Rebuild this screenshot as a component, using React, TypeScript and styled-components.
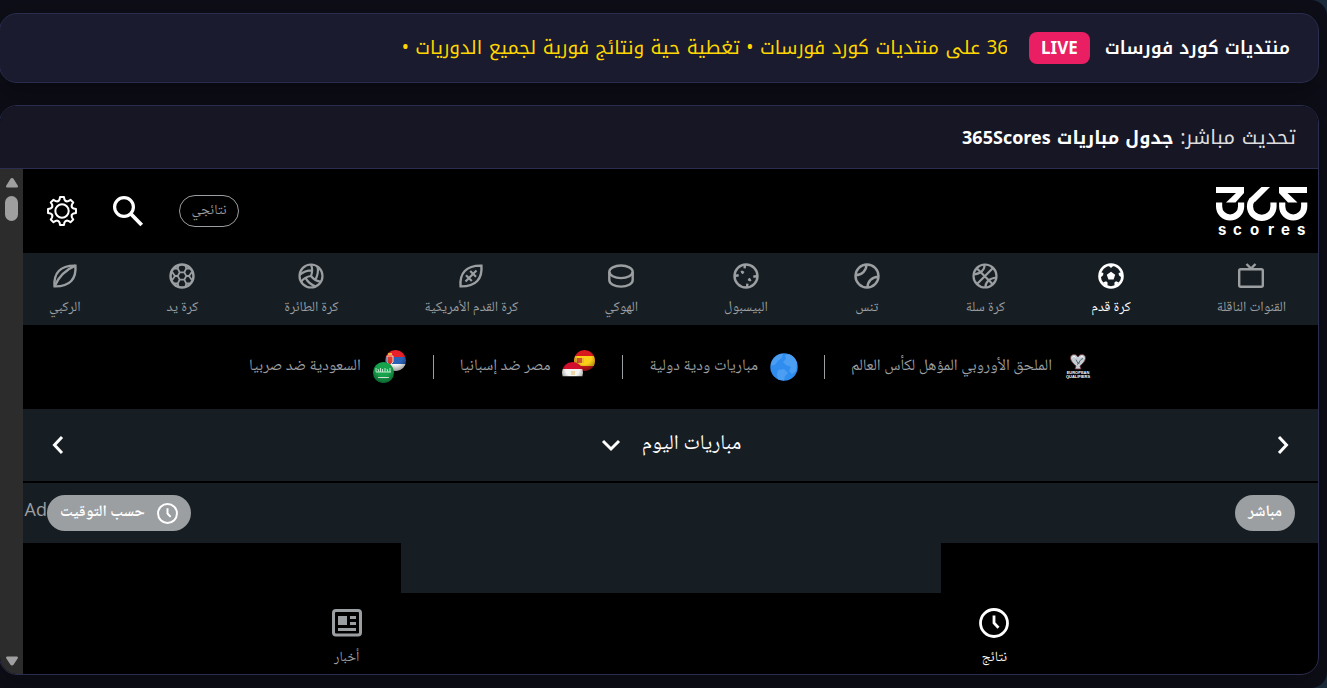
import React from 'react';
import styled, { createGlobalStyle } from 'styled-components';

const kufi = '"Noto Kufi Arabic", "Noto Sans", "DejaVu Sans", sans-serif';
const naskh = '"Noto Naskh Arabic", "Liberation Sans", "DejaVu Sans", sans-serif';

const GlobalStyle = createGlobalStyle`
  * { box-sizing: border-box; }
  body { margin: 0; background: #1c2b3b; }
  button { font: inherit; color: inherit; background: none; border: 0; padding: 0; cursor: pointer; }
  a { color: inherit; text-decoration: none; }
  svg { display: block; flex: none; overflow: visible; }
`;

const Page = styled.main`
  min-height: 100vh;
  display: flex;
  flex-direction: column;
  gap: 22px;
  padding: 13px 8px 13px 0;
  background: #0e0e18;
  border-radius: 0 16px 16px 0;
  font-family: ${kufi};
`;

const TopBar = styled.header`
  height: 70px;
  display: flex;
  align-items: center;
  padding: 0 28px 0 0;
  margin-left: -1px;
  background: #1a1b2e;
  border: 1px solid #2a2d4d;
  border-radius: 18px;
  box-shadow: 0 8px 30px rgba(0, 0, 0, 0.35);
`;

const SiteName = styled.h1`
  margin: 0;
  font-size: 18px;
  line-height: 32px;
  font-weight: 600;
  color: #fff;
  white-space: nowrap;
`;

const LiveBadge = styled.span`
  margin: 0 15px 0 22px;
  padding: 0 12px;
  border-radius: 8px;
  background: #e91e63;
  color: #fff;
  font: 700 17px/32px "Noto Sans", sans-serif;
`;

const Ticker = styled.div`
  flex: 1;
  min-width: 0;
  overflow: hidden;
  display: flex;
`;

const TickerTrack = styled.p`
  margin: 0 -12px 0 0;
  font-size: 19px;
  line-height: 40px;
  color: #ffd600;
  white-space: nowrap;
`;

const Panel = styled.section`
  flex: 1;
  display: flex;
  flex-direction: column;
  margin-left: -1px;
  border: 1px solid #2a2d4d;
  border-radius: 18px;
  overflow: hidden;
  background: #000;
  box-shadow: 0 8px 30px rgba(0, 0, 0, 0.35);
`;

const PanelHead = styled.h2`
  margin: 0;
  height: 63px;
  padding: 0 22px;
  background: #161625;
  border-bottom: 1px solid #2a2d4d;
  font-size: 20px;
  line-height: 62px;
  font-weight: 400;
  color: #ddd;
  strong { color: #fff; font-size: 18px; font-weight: 700; }
`;

const Frame = styled.div`
  flex: 1;
  display: flex;
`;

const ScrollRail = styled.div`
  width: 23px;
  display: flex;
  flex-direction: column;
  align-items: center;
  padding: 9px 0 8px;
  background: #2c2c2c;
`;

const Thumb = styled.div`
  width: 13px;
  height: 25px;
  margin: 8px 0 auto;
  border-radius: 7px;
  background: #9f9f9f;
`;

const Scores = styled.div`
  flex: 1;
  min-width: 0;
  display: flex;
  flex-direction: column;
  font-family: ${naskh};
  color: #9c9fa2;
`;

const ScoresHead = styled.div`
  height: 84px;
  display: flex;
  align-items: center;
  gap: 36px;
  padding: 0 10px 0 24px;
  color: #fff;
`;

const MyScores = styled.button`
  && {
    width: 60px;
    height: 32px;
    border: 1px solid #9c9fa2;
    border-radius: 16px;
    font-size: 14px;
    line-height: 28px;
    color: #9c9fa2;
  }
`;

const Sports = styled.nav`
  height: 72px;
  display: flex;
  justify-content: space-between;
  padding: 10px 32px 0 26px;
  background: #161e23;
`;

const Sport = styled.a<{ $active?: boolean }>`
  display: flex;
  flex-direction: column;
  align-items: center;
  gap: 7px;
  font-size: 14px;
  line-height: 24px;
  white-space: nowrap;
  color: ${(p) => (p.$active ? '#fff' : '#9c9fa2')};
`;

const Competitions = styled.nav`
  height: 84px;
  display: flex;
  align-items: center;
  justify-content: center;
`;

const Competition = styled.a`
  height: 24px;
  display: flex;
  align-items: center;
  gap: 12px;
  padding: 0 26px;
  font-size: 16px;
  line-height: 24px;
  white-space: nowrap;
  & + & { border-right: 1px solid #9c9fa2; }
`;

const DateRow = styled.div`
  height: 72px;
  display: flex;
  align-items: center;
  justify-content: space-between;
  padding: 0 24px;
  margin-bottom: 2px;
  background: #161e23;
  color: #fff;
`;

const DateSelect = styled.button`
  && {
    display: flex;
    align-items: center;
    gap: 20px;
    font-size: 21px;
    line-height: 40px;
  }
`;

const Filters = styled.div`
  height: 60px;
  display: flex;
  align-items: center;
  padding: 0 23px 0 0;
  background: #161e23;
`;

const Chip = styled.button`
  && {
    height: 36px;
    display: flex;
    align-items: center;
    gap: 12px;
    padding: 0 13px;
    border-radius: 18px;
    background: #9c9fa2;
    color: #fff;
    font-size: 16px;
    line-height: 32px;
    font-weight: 600;
  }
`;

const AdLabel = styled.span`
  width: 24px;
  padding-bottom: 8px;
  font: 400 18px/24px "Open Sans", sans-serif;
`;

const Spacer = styled.div`
  flex: 1;
`;

const AdSlot = styled.div`
  flex: 1;
  min-height: 50px;
  width: 540px;
  align-self: center;
  background: #161e23;
`;

const Tabs = styled.nav`
  height: 81px;
  display: grid;
  grid-template-columns: 1fr 1fr;
  padding-top: 15px;
`;

const Tab = styled.a<{ $active?: boolean }>`
  display: flex;
  flex-direction: column;
  align-items: center;
  gap: 8px;
  font-size: 14px;
  line-height: 24px;
  color: ${(p) => (p.$active ? '#fff' : '#9c9fa2')};
`;

const Icon = ({ size = 26, sw = 2.4, children }: { size?: number; sw?: number; children: React.ReactNode }) => (
  <svg width={size} height={size} viewBox={`0 0 ${size} ${size}`} fill="none" stroke="currentColor" strokeWidth={sw} aria-hidden="true">
    {children}
  </svg>
);

const Ball = <circle cx="13" cy="13" r="11.5" />;
const leaf = 'M2.600 23.400C1.400 10.500 8 2.300 23.400 2.600 24.600 15.500 18 23.700 2.600 23.400z';

const icons = {
  tv: (<Icon><rect x="1.200" y="6.200" width="23.600" height="17.600" rx="1.500" /><path d="M8.500 1l4.500 4.600L17.500 1" /></Icon>),
  soccer: (
    <Icon sw={2.6}>
      {Ball}
      <g fill="currentColor" stroke="none">
        <path d="M13 8.700l4.200 3-1.600 4.900h-5.200l-1.600-4.900z" />
        <path d="M9.800 2h6.400L13 4.900zM2 9l3.400 1-.3 2.200L2 15zM24 9l-3.400 1 .3 2.200L24 15zM5 19.500l3-1.300 1.600 1.300-.2 4.500zM21 19.500l-3-1.300-1.600 1.300.2 4.500z" />
      </g>
    </Icon>
  ),
  basket: (
    <Icon sw={2.2}>
      {Ball}
      <path d="M5 21L21 5M5 5.500l16 16M12.500 1.500c.6 4.500-3.500 9.500-11 10M13.500 24.500c-.6-4.500 3.500-9.500 11-10" />
    </Icon>
  ),
  tennis: (<Icon>{Ball}<path d="M12.500 1.500c0 6-4.500 10.500-11 10.800M13.500 24.500c0-6 4.500-10.500 11-10.800" /></Icon>),
  baseball: (
    <Icon>
      {Ball}
      <path d="M12 1.500l-.4 3.800M10.500 8.200L8.800 10.500M5.700 12.300L1.500 13M14 24.500l.4-3.800M15.500 17.800l1.700-2.300M20.300 13.700l4.200-.7" />
      <path d="M8 8l2.300 2.300M15.700 15.700l2.300 2.300" strokeWidth="1.600" />
    </Icon>
  ),
  hockey: (<Icon><ellipse cx="13" cy="8.800" rx="11.700" ry="6.300" /><path d="M1.300 9v8c0 3.700 5.200 6.600 11.700 6.600s11.700-2.900 11.700-6.600V9" /></Icon>),
  football: (
    <Icon>
      <path d={leaf} />
      <path d="M7.500 18.500L18.500 7.500M8 12.200l5.800 5.800M12.200 8l5.800 5.800" strokeWidth="2.200" />
    </Icon>
  ),
  volley: (
    <Icon>
      <g transform="matrix(-1.150 0 0 1.150 26.800 -.8)" strokeWidth="1.900">
        <circle cx="12" cy="12" r="10" />
        <path d="M11.100 7.100a16.550 16.550 0 0 1 10.900 4M12 12a12.600 12.600 0 0 1-8.700 5M16.800 13.600a16.550 16.550 0 0 1-9 7.500M20.700 17a12.800 12.800 0 0 0-8.700-5 13.300 13.300 0 0 1 0-10M6.300 3.800a16.550 16.550 0 0 0 1.900 11.500" />
      </g>
    </Icon>
  ),
  hand: (
    <Icon sw={1.8}>
      <circle cx="13" cy="13" r="11.500" strokeWidth="2.400" />
      <path d="M10.700 9.300h4.600l2 3.700-2 3.700h-4.600l-2-3.700zM10.700 9.300L8.700 5.500l1-3.500M15.300 9.300l2-3.800-1-3.500M10.700 16.700l-2 3.800 1 3.500M15.300 16.700l2 3.800-1 3.500M8.700 5.500H4.500M17.300 5.500h4.200M8.700 20.500H4.500M17.300 20.500h4.200M8.700 13H6L3 8.800M6 13l-3 4.200M17.300 13H20l3-4.200M20 13l3 4.200" />
    </Icon>
  ),
  rugby: (<Icon><path d={leaf} /><path d="M2.600 23.400C6 15 13 7 23.400 2.600" /></Icon>),
};

const sports: { icon: keyof typeof icons; label: string; active?: boolean }[] = [
  { icon: 'tv', label: 'القنوات الناقلة' },
  { icon: 'soccer', label: 'كرة قدم', active: true },
  { icon: 'basket', label: 'كرة سلة' },
  { icon: 'tennis', label: 'تنس' },
  { icon: 'baseball', label: 'البيسبول' },
  { icon: 'hockey', label: 'الهوكي' },
  { icon: 'football', label: 'كرة القدم الأمريكية' },
  { icon: 'volley', label: 'كرة الطائرة' },
  { icon: 'hand', label: 'كرة يد' },
  { icon: 'rugby', label: 'الركبي' },
];

// Eight rounded teeth around a ring.
const gearPath = (() => {
  const at = (r: number, deg: number) => {
    const a = (deg * Math.PI) / 180;
    return `${(15 + r * Math.sin(a)).toFixed(2)} ${(15 - r * Math.cos(a)).toFixed(2)}`;
  };
  let d = '';
  for (let k = 0; k < 8; k++) {
    const c = k * 45;
    d += `${k ? 'L' : 'M'}${at(14.1, c - 8)}L${at(14.1, c + 8)}L${at(11.8, c + 12)}Q${at(9.6, c + 22.5)} ${at(11.8, c + 33)}`;
  }
  return d + 'Z';
})();

const Gear = () => (<Icon size={30} sw={2}><path d={gearPath} strokeLinejoin="round" /><circle cx="15" cy="15" r="6.700" /></Icon>);
const Search = () => (<Icon size={30} sw={3.2}><circle cx="11" cy="11" r="9.400" /><path d="M18 18l10.700 11" strokeWidth="3.800" /></Icon>);
const Clock = ({ size }: { size: number }) => (
  <svg width={size} height={size} viewBox="0 0 30 30" fill="none" stroke="currentColor" strokeWidth="2.800" aria-hidden="true">
    <circle cx="15" cy="15" r="13.500" /><path d="M15 7.500v7.500l4.500 4.800" />
  </svg>
);
const News = () => (
  <Icon size={30} sw={3}>
    <rect x="1.500" y="2.500" width="27" height="24.500" rx="2.500" />
    <path fill="currentColor" stroke="none" d="M6 8h9v9H6zM18 8h6v3h-6zM18 14h6v3h-6zM6 20h18v3H6z" />
  </Icon>
);
const Chevron = ({ d }: { d: string }) => (<Icon size={22} sw={3}><path d={d} /></Icon>);

const Logo = () => (
  <svg width="92" height="50" viewBox="0 0 92 50" fill="none" stroke="#fff" strokeWidth="6.200" role="img" aria-label="365 scores">
    <path fill="#fff" stroke="none" d="M0 1h28v6L19.500 16.500H10L20 7H0z" />
    <path d="M3.100 16.500v4a11 11 0 0 0 22 0v-4" />
    <path fill="#fff" stroke="none" d="M45.500 1H54L39 16l-6-3z" />
    <path d="M36.500 13.500c-2 2.200-2.500 4.500-2.500 7a11.400 11 0 0 0 23.500 0v-4" />
    <path fill="#fff" stroke="none" d="M91 1H63v6l9 9.500h9.500L71.500 7H91z" />
    <path d="M66.200 16.500v4a11 11 0 0 0 22 0v-4" />
    <text y="49" x="2 17 34 52 65 81" direction="ltr" fill="#fff" stroke="none" fontFamily="Inter, sans-serif" fontSize="15" fontWeight="700">scores</text>
  </svg>
);

const Qualifiers = () => (
  <svg width="28" height="28" viewBox="0 0 28 28" aria-hidden="true">
    <path d="M14 4c2-4 8-3 7.500 1.500C21 9 18 11 16 13l1 3h-6l1-3C10 11 7 9 6.500 5.500 6 1 12 0 14 4z" fill="#c3ccd3" stroke="#6b3038" strokeWidth=".8" />
    <path d="M12 6.500l2 4 3-4 2-1M13 11.500l3-2" fill="none" stroke="#5c6973" />
    <path d="M8.500 4.500c1-1.500 2-1.500 3 0M16 4.500c1-1.500 2.500-1.500 3.500 0" fill="none" stroke="#fff" />
    <text x="14" y="21" textAnchor="middle" direction="ltr" fontSize="4" fontWeight="700" fill="#fff" fontFamily="Liberation Sans">EUROPEAN</text>
    <text x="14" y="25" textAnchor="middle" direction="ltr" fontSize="4" fontWeight="700" fill="#fff" fontFamily="Liberation Sans">QUALIFIERS</text>
  </svg>
);

const Globe = () => (
  <svg width="28" height="28" viewBox="0 0 28 28" aria-hidden="true">
    <circle cx="14" cy="14" r="13.700" fill="#2f8df0" />
    <path d="M2 8C5 3 9 1 13 .8l-1 4-4 3-3 4-4 1zM15 2l4-1c4 1.500 7 5 8 9l-1 8-4 3-3-3 2-4-5-2-3-3 3-3zM8 17l6-1 4 4-3 3-1 4.500-6-1-1-5z" fill="#4c9ef2" />
  </svg>
);

const Flags = ({ id, back, front }: { id: string; back: React.ReactNode; front: React.ReactNode }) => (
  <svg width="34" height="34" viewBox="0 0 34 34" aria-hidden="true">
    <defs>
      <clipPath id={`${id}-c`}><circle cx="10.500" cy="10.500" r="10.500" /></clipPath>
      <radialGradient id={`${id}-g`} cx=".5" cy=".35" r=".65">
        <stop offset=".5" stopColor="#000" stopOpacity="0" /><stop offset="1" stopColor="#000" stopOpacity=".4" />
      </radialGradient>
    </defs>
    {[back, front].map((flag, i) => (
      <g key={i} transform={i ? 'translate(0 12)' : 'translate(12 0)'} clipPath={`url(#${id}-c)`}>
        {flag}
        <circle cx="10.500" cy="10.500" r="10.500" fill={`url(#${id}-g)`} />
      </g>
    ))}
  </svg>
);

const Serbia = (<><path d="M0 0h21v7H0z" fill="#e8202a" /><path d="M0 7h21v7H0z" fill="#2a62b8" /><path d="M0 14h21v7H0z" fill="#fff" /><path d="M2 6h6v6l-3 3-3-3z" fill="#e0392e" stroke="#f4d9c0" /><path d="M3 3h4v2H3z" fill="#f0b33a" /></>);
const Saudi = (<><path d="M0 0h21v21H0z" fill="#16a34c" /><path d="M3 6v4M5 7l1 3M7.500 6v4M9.500 7v3M12 6v4M14 7l1 3M17 6v4M3 10h15" stroke="#bfe8cd" /><path d="M5 15.500h11" stroke="#e6f7ec" /></>);
const Spain = (<><path d="M0 0h21v21H0z" fill="#d81a1e" /><path d="M0 6h21v10H0z" fill="#fccf19" /><path d="M3 8h5v5H3z" fill="#c9532b" /><path d="M2 8v5M9 8v5" stroke="#d99a5b" /></>);
const Egypt = (<><path d="M0 0h21v7H0z" fill="#d20f2c" /><path d="M0 7h21v7.500H0z" fill="#f4f4f2" /><path d="M9 9h4v4H9z" fill="#ead9a4" /><path d="M0 14.500h21V21H0z" fill="#000" /></>);

const competitions = [
  { icon: <Qualifiers />, label: 'الملحق الأوروبي المؤهل لكأس العالم' },
  { icon: <Globe />, label: 'مباريات ودية دولية' },
  { icon: <Flags id="es-eg" back={Spain} front={Egypt} />, label: 'مصر ضد إسبانيا' },
  { icon: <Flags id="rs-sa" back={Serbia} front={Saudi} />, label: 'السعودية ضد صربيا' },
];

export default function App() {
  return (
    <>
      <GlobalStyle />
      <Page>
        <TopBar dir="rtl">
          <SiteName>منتديات كورد فورسات</SiteName>
          <LiveBadge>LIVE</LiveBadge>
          <Ticker>
            <TickerTrack>365 على منتديات كورد فورسات • تغطية حية ونتائج فورية لجميع الدوريات •</TickerTrack>
          </Ticker>
        </TopBar>
        <Panel>
          <PanelHead dir="rtl">تحديث مباشر: <strong>جدول مباريات 365Scores</strong></PanelHead>
          <Frame>
            <ScrollRail>
              <svg width="12" height="10" viewBox="0 0 12 10" fill="#9f9f9f"><path d="M6 0q1 0 1.500.8L12 8q0 1.500-1 1.500H1Q0 9.500 0 8L4.500.8Q5 0 6 0z" /></svg>
              <Thumb />
              <svg width="12" height="10" viewBox="0 0 12 10" fill="#9f9f9f"><path d="M6 9.500q1 0 1.500-.8L12 2q0-1.500-1-1.500H1Q0 .5 0 2l4.500 6.700q.5.8 1.500.8z" /></svg>
            </ScrollRail>
            <Scores dir="rtl">
              <ScoresHead>
                <a href="#home"><Logo /></a>
                <Spacer />
                <MyScores type="button">نتائجي</MyScores>
                <button type="button" aria-label="بحث"><Search /></button>
                <button type="button" aria-label="إعدادات"><Gear /></button>
              </ScoresHead>
              <Sports>
                {sports.map((s) => (
                  <Sport key={s.icon} href={`#${s.icon}`} $active={s.active}>
                    {icons[s.icon]}
                    {s.label}
                  </Sport>
                ))}
              </Sports>
              <Competitions>
                {competitions.map((c) => (
                  <Competition key={c.label} href="#competition">{c.icon}{c.label}</Competition>
                ))}
              </Competitions>
              <DateRow>
                <button type="button" aria-label="اليوم السابق"><Chevron d="M7 3l7.500 8L7 19" /></button>
                <DateSelect type="button">مباريات اليوم <Chevron d="M3 7l8 8 8-8" /></DateSelect>
                <button type="button" aria-label="اليوم التالي"><Chevron d="M15 3l-7.500 8 7.500 8" /></button>
              </DateRow>
              <Filters>
                <Chip type="button">مباشر</Chip>
                <Spacer />
                <Chip type="button"><Clock size={21} />حسب التوقيت</Chip>
                <AdLabel>Ad</AdLabel>
              </Filters>
              <AdSlot />
              <Tabs>
                <Tab href="#scores" $active><Clock size={30} />نتائج</Tab>
                <Tab href="#news"><News />أخبار</Tab>
              </Tabs>
            </Scores>
          </Frame>
        </Panel>
      </Page>
    </>
  );
}
